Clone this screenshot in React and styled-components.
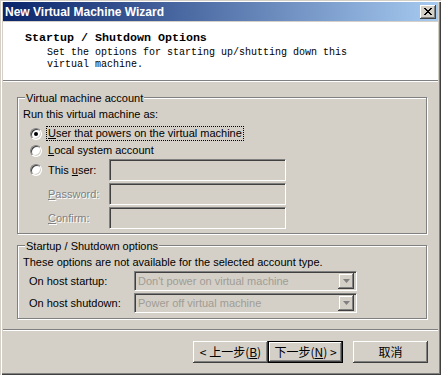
import React from "react";
import styled, { createGlobalStyle } from "styled-components";

const GlobalStyle = createGlobalStyle`
  html, body {
    margin: 0;
    padding: 0;
    background: #d4d0c8;
  }
`;

const Window = styled.div`
  width: 441px;
  height: 375px;
  box-sizing: border-box;
  padding: 2px 3px 3px 3px;
  background: #d4d0c8;
  display: flex;
  flex-direction: column;
  font-family: "Liberation Sans", Arial, sans-serif;
  font-size: 11px;
  color: #000;
  box-shadow: inset 1px 1px #d4d0c8, inset 2px 2px #fff, inset -1px -1px #404040,
    inset -2px -2px #808080;
`;

const TitleBar = styled.div`
  height: 19px;
  margin-bottom: 1px;
  display: flex;
  align-items: center;
  justify-content: space-between;
  padding: 0 2px 0 2px;
  background: linear-gradient(to right, #0a246a, #a6caf0);
`;

const TitleText = styled.span`
  color: #fff;
  font-weight: bold;
  font-size: 12px;
`;

const CloseButton = styled.div`
  width: 16px;
  height: 14px;
  box-sizing: border-box;
  background: #d4d0c8;
  box-shadow: inset -1px -1px #404040, inset 1px 1px #fff, inset -2px -2px #808080;
  display: flex;
  align-items: center;
  justify-content: center;
`;

const Header = styled.div`
  height: 59px;
  box-sizing: border-box;
  background: #fff;
  border-bottom: 1px solid #808080;
  padding: 9px 0 0 22px;
  font-family: "Liberation Mono", "Courier New", monospace;
`;

const HeaderTitle = styled.div`
  font-weight: bold;
  font-size: 11.67px;
  line-height: 14px;
`;

const HeaderSub = styled.div`
  font-size: 10px;
  line-height: 12px;
  margin: 2px 0 0 22px;
`;

const Body = styled.div`
  flex: 1;
  display: flex;
  flex-direction: column;
  border-top: 1px solid #fff;
`;

const Content = styled.div`
  flex: 1;
  padding: 15px 11px 0 14px;
`;

const GroupBox = styled.div`
  border: 1px solid #808080;
  box-shadow: inset 1px 1px #fff, 1px 1px #fff;
  padding: 0 0 ${(p) => p.$bottom}px 5px;
  margin-top: ${(p) => p.$top}px;
`;

const Legend = styled.div`
  width: fit-content;
  margin: -6px 0 0 2px;
  padding: 0 1px;
  line-height: 13px;
  background: #d4d0c8;
`;

const Line = styled.div`
  line-height: 13px;
  margin-top: 3px;
`;

const OptionGrid = styled.div`
  display: grid;
  grid-template-columns: 18px 61px 177px;
  margin: 4px 0 0 7px;
`;

const Cell = styled.div`
  height: ${(p) => p.$h}px;
  margin-top: ${(p) => p.$mt || 0}px;
  display: flex;
  align-items: center;
  grid-column: ${(p) => p.$span || "auto"};
`;

const Radio = styled.span`
  width: 12px;
  height: 12px;
  box-sizing: border-box;
  border-radius: 50%;
  border: 1px solid;
  border-color: #808080 #fff #fff #808080;
  box-shadow: inset 1px 1px #404040, inset -1px -1px #d4d0c8;
  background: #fff;
  display: flex;
  align-items: center;
  justify-content: center;
  &::after {
    content: "";
    width: 4px;
    height: 4px;
    border-radius: 50%;
    background: ${(p) => (p.$checked ? "#000" : "transparent")};
  }
`;

const Label = styled.span`
  white-space: nowrap;
  line-height: 13px;
  padding: 0 1px;
  margin-left: -1px;
  outline: ${(p) => (p.$focus ? "1px dotted #000" : "none")};
  color: ${(p) => (p.$disabled ? "#808080" : "#000")};
  text-shadow: ${(p) => (p.$disabled ? "1px 1px #fff" : "none")};
`;

const Field = styled.div`
  width: ${(p) => p.$w}px;
  height: ${(p) => p.$h}px;
  box-sizing: border-box;
  background: #d4d0c8;
  border: 1px solid;
  border-color: #808080 #fff #fff #808080;
  box-shadow: inset 1px 1px #404040, inset -1px -1px #d4d0c8;
  display: flex;
  align-items: center;
  padding: 0 2px 0 3px;
`;

const ComboText = styled.span`
  flex: 1;
  white-space: nowrap;
  color: #a09c94;
`;

const DropButton = styled.div`
  width: 16px;
  height: 16px;
  box-sizing: border-box;
  background: #d4d0c8;
  box-shadow: inset -1px -1px #404040, inset 1px 1px #d4d0c8, inset -2px -2px #808080,
    inset 2px 2px #fff;
  display: flex;
  align-items: center;
  justify-content: center;
`;

const ComboGrid = styled.div`
  display: grid;
  grid-template-columns: 105px 223px;
  margin: 2px 0 0 6px;
  row-gap: 2px;
`;

const Footer = styled.div`
  height: 43px;
  box-sizing: border-box;
  border-top: 1px solid #808080;
  box-shadow: inset 0 1px #fff;
  display: flex;
  justify-content: flex-end;
  align-items: flex-start;
  padding: 11px 10px 0 0;
  font-family: "Noto Sans CJK SC", "Liberation Sans", sans-serif;
  font-size: 12px;
`;

const Button = styled.div`
  width: 75px;
  height: 22px;
  box-sizing: border-box;
  margin-left: ${(p) => p.$ml || 0}px;
  background: #d4d0c8;
  border: ${(p) => (p.$default ? "1px solid #000" : "none")};
  box-shadow: inset -1px -1px #404040, inset 1px 1px #fff, inset -2px -2px #808080,
    inset 2px 2px #d4d0c8;
  display: flex;
  align-items: center;
  justify-content: center;
  white-space: nowrap;
  line-height: 14px;
`;

const Arrow = ({ color = "#808080" }) => (
  <svg width="7" height="4" viewBox="0 0 7 4">
    <path d="M0 0h7L3.5 4z" fill={color} />
  </svg>
);

const Combo = ({ text }) => (
  <Field $w={223} $h={20}>
    <ComboText>{text}</ComboText>
    <DropButton>
      <Arrow />
    </DropButton>
  </Field>
);

export default function App() {
  return (
    <>
      <GlobalStyle />
      <Window>
        <TitleBar>
          <TitleText>New Virtual Machine Wizard</TitleText>
          <CloseButton>
            <svg width="8" height="7" viewBox="0 0 8 7">
              <path d="M0 0L7 7M1 0L8 7M7 0L0 7M8 0L1 7" stroke="#000" strokeWidth="1" />
            </svg>
          </CloseButton>
        </TitleBar>
        <Header>
          <HeaderTitle>Startup / Shutdown Options</HeaderTitle>
          <HeaderSub>
            Set the options for starting up/shutting down this
            <br />
            virtual machine.
          </HeaderSub>
        </Header>
        <Body>
          <Content>
            <GroupBox $top={0} $bottom={4}>
              <Legend>Virtual machine account</Legend>
              <Line>Run this virtual machine as:</Line>
              <OptionGrid>
                <Cell $h={17}>
                  <Radio $checked />
                </Cell>
                <Cell $h={17} $span="2 / 4">
                  <Label $focus>
                    <u>U</u>ser that powers on the virtual machine
                  </Label>
                </Cell>
                <Cell $h={17}>
                  <Radio />
                </Cell>
                <Cell $h={17} $span="2 / 4">
                  <Label>
                    <u>L</u>ocal system account
                  </Label>
                </Cell>
                <Cell $h={22}>
                  <Radio />
                </Cell>
                <Cell $h={22}>
                  <Label>
                    This <u>u</u>ser:
                  </Label>
                </Cell>
                <Cell $h={22}>
                  <Field $w={177} $h={22} />
                </Cell>
                <Cell $h={22} $mt={2} />
                <Cell $h={22} $mt={2}>
                  <Label $disabled>
                    <u>P</u>assword:
                  </Label>
                </Cell>
                <Cell $h={22} $mt={2}>
                  <Field $w={177} $h={22} />
                </Cell>
                <Cell $h={22} $mt={2} />
                <Cell $h={22} $mt={2}>
                  <Label $disabled>
                    <u>C</u>onfirm:
                  </Label>
                </Cell>
                <Cell $h={22} $mt={2}>
                  <Field $w={177} $h={22} />
                </Cell>
              </OptionGrid>
            </GroupBox>
            <GroupBox $top={11} $bottom={5}>
              <Legend>Startup / Shutdown options</Legend>
              <Line>These options are not available for the selected account type.</Line>
              <ComboGrid>
                <Cell $h={20}>
                  <Label>On host startup:</Label>
                </Cell>
                <Combo text="Don't power on virtual machine" />
                <Cell $h={20}>
                  <Label>On host shutdown:</Label>
                </Cell>
                <Combo text="Power off virtual machine" />
              </ComboGrid>
            </GroupBox>
          </Content>
          <Footer>
            <Button>
              &lt; 上一步(<u>B</u>)
            </Button>
            <Button $default>
              下一步(<u>N</u>) &gt;
            </Button>
            <Button $ml={10}>取消</Button>
          </Footer>
        </Body>
      </Window>
    </>
  );
}
